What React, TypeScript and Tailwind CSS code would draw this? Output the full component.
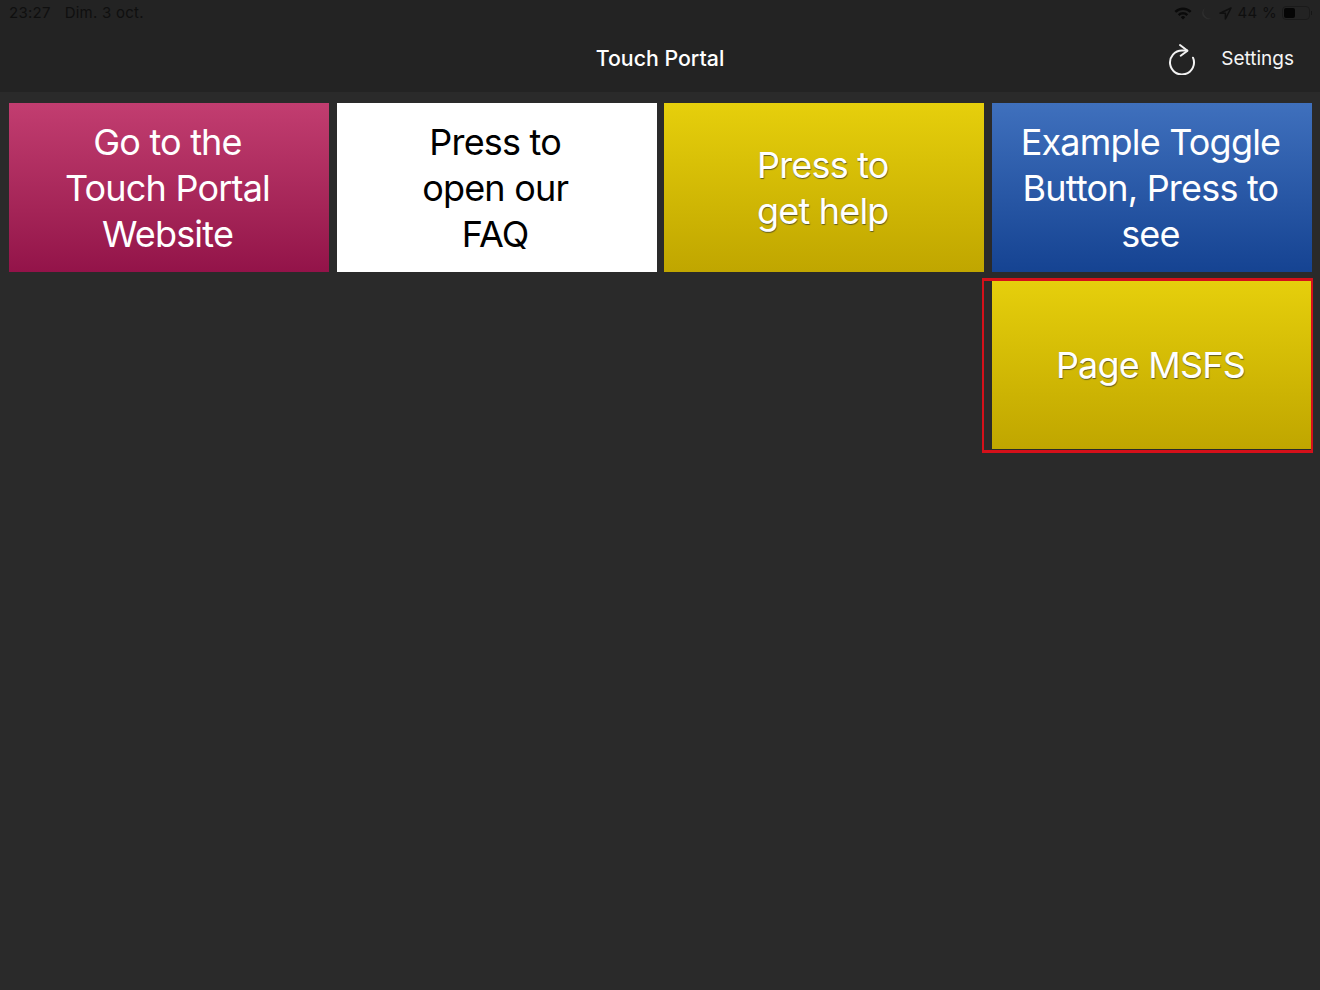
const buttons = [
  { lines: ["Go to the", "Touch Portal", "Website"], bg: "bg-gradient-to-b from-[#c23d70] to-[#931349]", text: "text-white" },
  { lines: ["Press to", "open our", "FAQ"], bg: "bg-white", text: "text-black" },
  { lines: ["Press to", "get help"], bg: "bg-gradient-to-b from-[#e6cf0c] to-[#c0a600]", text: "text-white [text-shadow:0.5px_1px_1px_#5f5a20]" },
  { lines: ["Example Toggle", "Button, Press to", "see"], bg: "bg-gradient-to-b from-[#3f70bd] to-[#154392]", text: "text-white" },
];

function TouchButton({ lines, bg, text }: { lines: string[]; bg: string; text: string }) {
  return (
    <div className={`flex h-[169px] flex-col items-center justify-center pr-[3px] text-center text-[36px] leading-[46px] tracking-[-0.8px] ${bg} ${text}`}>
      {lines.map((line) => (
        <span key={line}>{line}</span>
      ))}
    </div>
  );
}

const StatusBar = () => (
  <div className="flex h-[26px] items-center justify-between pl-[9px] pr-[8px] text-[15px] text-[#0f0f0f]">
    <div className="flex gap-[14px] tracking-[0.25px]">
      <span>23:27</span>
      <span>Dim. 3 oct.</span>
    </div>
    <div className="flex items-center">
      <svg width="18" height="14" viewBox="0 0 18 14" className="mr-[9px]">
        <path d="M0.5 5a12 12 0 0 1 17 0l-1.7 1.8a9.6 9.6 0 0 0-13.6 0z" fill="#0a0a0a" />
        <path d="M3.8 8.2a7.4 7.4 0 0 1 10.4 0l-1.7 1.8a5 5 0 0 0-7 0z" fill="#0a0a0a" />
        <path d="M6.8 11.2a3.1 3.1 0 0 1 4.4 0L9 13.5z" fill="#0a0a0a" />
      </svg>
      <svg width="11" height="13" viewBox="0 0 11 13" className="mr-[7px]">
        <path d="M4 1a6 6 0 0 0 6.5 10.2A6.4 6.4 0 0 1 4 1z" fill="#2e2e2e" />
      </svg>
      <svg width="13" height="13" viewBox="0 0 13 13" className="mr-[5px]">
        <path d="M12 1 1 6.2h5.4V12z" fill="none" stroke="#0f0f0f" strokeWidth="1.5" strokeLinejoin="round" />
      </svg>
      <span className="mr-[5px] tracking-[0.3px]">44 %</span>
      <div className="flex h-[14px] w-[28px] items-center rounded-[4px] border border-[#1a1a1a] p-[1px]">
        <div className="h-full w-[11px] rounded-[2px] bg-[#050505]" />
      </div>
      <div className="ml-[1px] h-[4px] w-[1px] bg-[#161616]" />
    </div>
  </div>
);

export default function App() {
  return (
    <div className="min-h-[990px] bg-[#2a2a2a] font-['Inter',sans-serif]">
      <header className="h-[92px] bg-[#232323]">
        <StatusBar />
        <div className="relative flex h-[66px] items-center justify-end text-white">
          <span className="absolute inset-x-0 text-center text-[21.3px] font-medium leading-none">Touch Portal</span>
          <svg width="28" height="32" viewBox="0 0 28 32" fill="none" stroke="#f2f2f2" strokeWidth="2" strokeLinecap="round" strokeLinejoin="round" className="mr-[25px]">
            <path d="M19 7.6C17.5 7.5 15.5 7.5 14 7.5A12 12 0 1 0 25 14.7" />
            <path d="M12 2l7.5 5.7-6.8 5" />
          </svg>
          <span className="mr-[26px] text-[19px] text-[#f5f5f5]">Settings</span>
        </div>
      </header>
      <main className="grid grid-cols-[repeat(4,320px)] gap-x-[7.67px] gap-y-[8px] pl-[9px] pt-[11px]">
        {buttons.map((b) => (
          <TouchButton key={b.lines[0] + b.bg} {...b} />
        ))}
        <div className="relative col-start-4">
          <TouchButton
            lines={["Page MSFS"]}
            bg="bg-gradient-to-b from-[#e6cf0c] to-[#c0a600]"
            text="text-white [text-shadow:0.5px_1px_1px_#5f5a20]"
          />
          <div className="absolute -bottom-[4px] -left-[10px] -right-[1px] -top-[2px] border-x-[2px] border-y-[3px] border-[#d4101a]" />
        </div>
      </main>
    </div>
  );
}
